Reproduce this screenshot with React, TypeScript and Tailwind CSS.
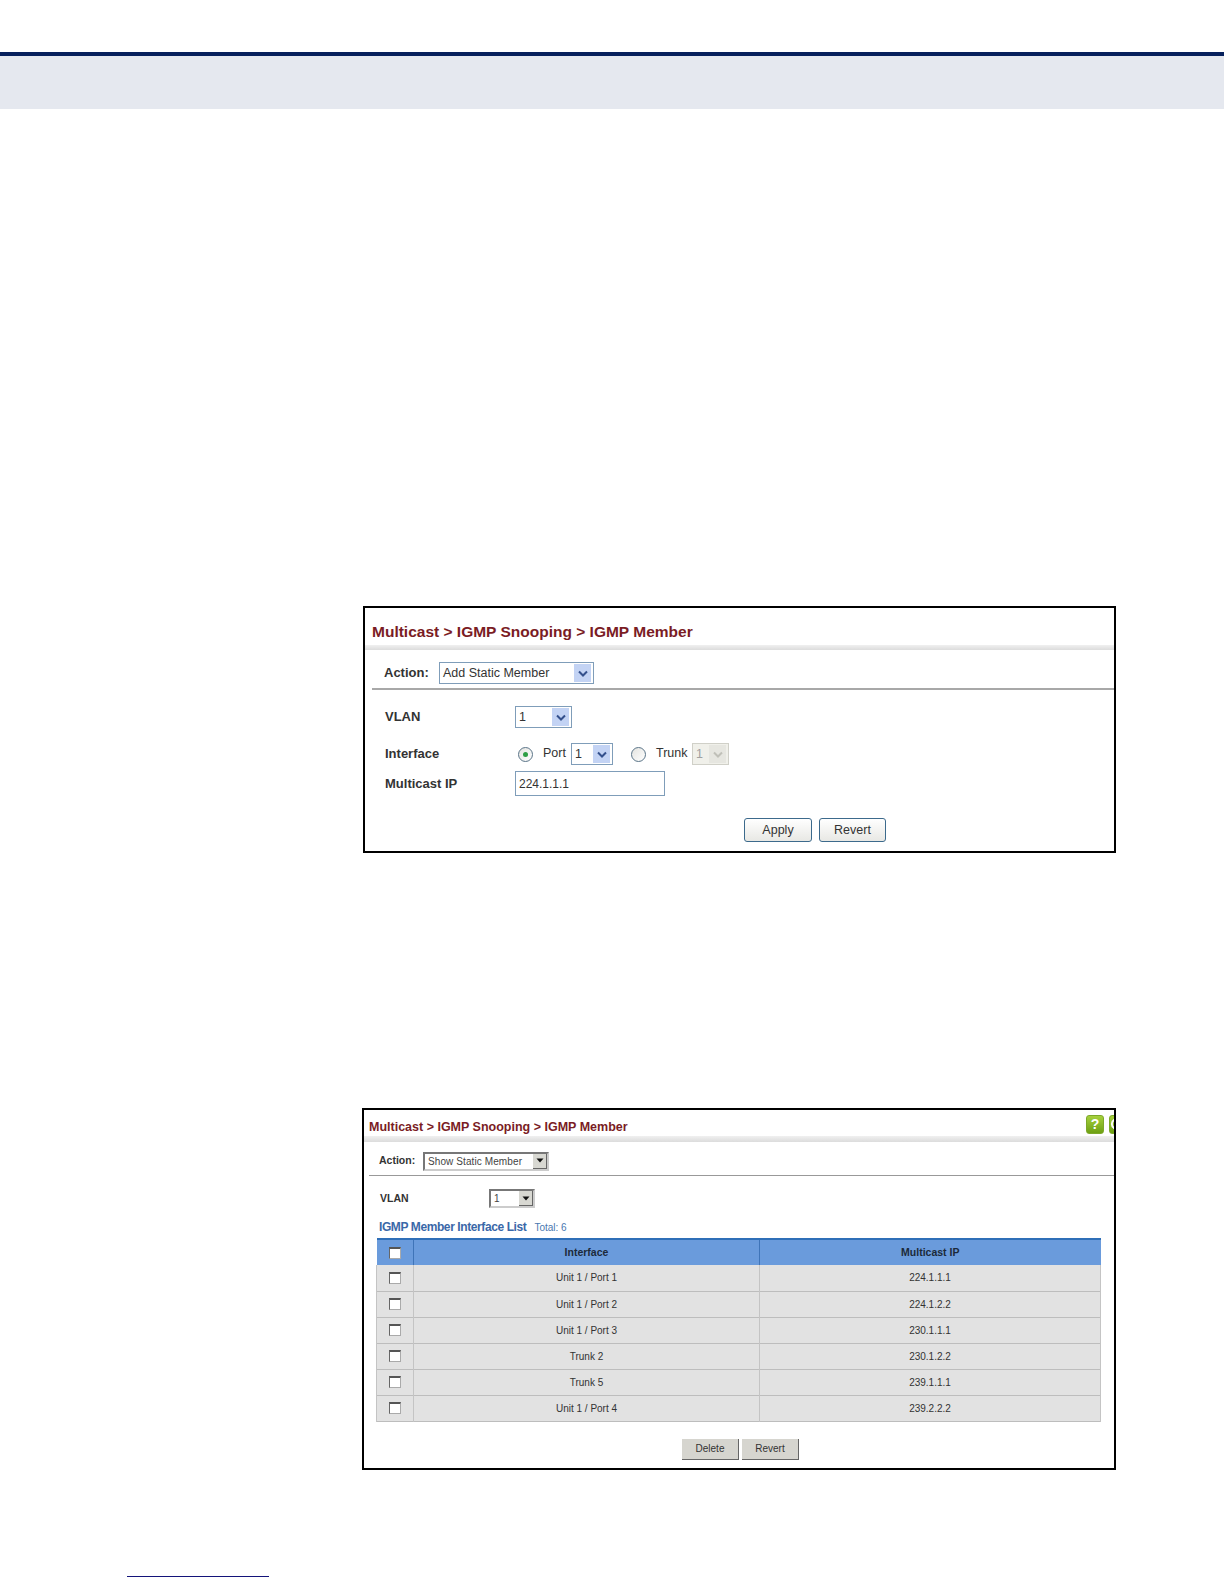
import type { ReactNode } from "react";

const rows = [
    { iface: "Unit 1 / Port 1", ip: "224.1.1.1" },
    { iface: "Unit 1 / Port 2", ip: "224.1.2.2" },
    { iface: "Unit 1 / Port 3", ip: "230.1.1.1" },
    { iface: "Trunk 2", ip: "230.1.2.2" },
    { iface: "Trunk 5", ip: "239.1.1.1" },
    { iface: "Unit 1 / Port 4", ip: "239.2.2.2" },
];

// Vista style dropdown from the first screenshot
function BlueSelect({ value, width, disabled }: { value: string; width: string; disabled?: boolean }) {
    return (
        <div className={`flex items-center justify-between h-[22px] border pl-[3px] pr-[2px] text-[12.5px] ${width} ${disabled ? "border-[#d0d0c8] bg-[#f0f0ea] text-[#a0a0a0]" : "border-[#7f9db9] bg-white text-[#333]"}`}>
            <span>{value}</span>
            <span className={`flex items-center justify-center w-[17px] h-[18px] ${disabled ? "bg-[#e6e6e0]" : "bg-[#c3d3f4]"}`}>
                <svg width="10" height="7" viewBox="0 0 10 7">
                    <path d="M1 1.5 L5 5.5 L9 1.5" fill="none" stroke={disabled ? "#c0c0b8" : "#34508c"} strokeWidth="2" />
                </svg>
            </span>
        </div>
    );
}

// Classic sunken dropdown from the second screenshot
function GraySelect({ value, width }: { value: string; width: string }) {
    return (
        <div className={`flex items-center justify-between h-[19px] border-2 border-t-[#777] border-l-[#777] border-r-[#ccc] border-b-[#ccc] pl-[3px] text-[10px] tracking-[0.1px] text-[#444] ${width}`}>
            <span>{value}</span>
            <span className="flex items-center justify-center w-[14px] h-[15px] bg-[#d8d8d2] border-r border-b border-[#666]">
                <svg width="8" height="5" viewBox="0 0 8 5">
                    <path d="M0.5 0.5 H7.5 L4 4.5 Z" fill="#111" />
                </svg>
            </span>
        </div>
    );
}

function Radio({ checked }: { checked?: boolean }) {
    return (
        <span className="flex items-center justify-center w-[15px] h-[15px] rounded-full border border-[#5a7488] bg-gradient-to-br from-[#e4e4e0] to-white">
            {checked && <span className="w-[5px] h-[5px] rounded-full bg-[#2f9e44]" />}
        </span>
    );
}

function RoundButton({ label, width }: { label: string; width: string }) {
    return (
        <div className={`flex items-center justify-center h-[24px] rounded-[3px] border border-[#3c6a8c] bg-gradient-to-b from-white to-[#e8e8e4] text-[12.5px] text-[#333] ${width}`}>
            {label}
        </div>
    );
}

function FlatButton({ label }: { label: string }) {
    return (
        <div className="flex items-center justify-center w-[57px] h-[21px] bg-[#d6d5cf] border-r border-b border-[#666] text-[10px] text-[#333]">
            {label}
        </div>
    );
}

function HelpIcon({ children }: { children: ReactNode }) {
    return (
        <span className="flex flex-none items-center justify-center w-[18px] h-[19px] rounded-[3px] bg-gradient-to-b from-[#a6d13c] to-[#6ea012] border border-[#7da82a] text-[14px] font-bold text-white">
            {children}
        </span>
    );
}

function Checkbox() {
    return <span className="block w-[12px] h-[12px] bg-white border border-[#aaa] border-t-2 border-t-[#555] border-l-[#666]" />;
}

function AddPanel() {
    return (
        <section className="ml-[363px] w-[753px] h-[247px] border-2 border-black bg-white font-['Liberation_Sans',Arial,sans-serif]">
            <h2 className="pl-[7px] pt-[14px] h-[37px] text-[15.5px] leading-[20px] font-bold text-[#7a1c24]">
                Multicast &gt; IGMP Snooping &gt; IGMP Member
            </h2>
            <div className="h-[5px] bg-gradient-to-b from-[#f0f0f0] to-[#dcdcdc]" />
            <div className="ml-[7px] h-[40px] flex items-center border-b-2 border-[#a8a8a8] pl-[12px] pt-[8px]">
                <span className="w-[55px] text-[13px] font-bold text-[#333]">Action:</span>
                <BlueSelect value="Add Static Member" width="w-[155px]" />
            </div>
            <div className="pl-[20px] pt-[16px]">
                <div className="flex items-center h-[22px]">
                    <span className="w-[130px] text-[13px] font-bold text-[#333]">VLAN</span>
                    <BlueSelect value="1" width="w-[57px]" />
                </div>
                <div className="flex items-center h-[22px] mt-[15px]">
                    <span className="w-[133px] text-[13px] font-bold text-[#333]">Interface</span>
                    <Radio checked />
                    <span className="ml-[10px] w-[28px] pb-[2px] text-[12.5px] text-[#333]">Port</span>
                    <BlueSelect value="1" width="w-[42px]" />
                    <span className="ml-[18px]"><Radio /></span>
                    <span className="ml-[10px] w-[37px] pb-[2px] text-[12.5px] text-[#333]">Trunk</span>
                    <span className="-ml-[1px]"><BlueSelect value="1" width="w-[37px]" disabled /></span>
                </div>
                <div className="flex items-center h-[25px] mt-[6px]">
                    <span className="w-[130px] text-[13px] font-bold text-[#333]">Multicast IP</span>
                    <div className="flex items-center w-[150px] h-[25px] border border-[#7f9db9] pl-[3px] text-[12px] text-[#333]">224.1.1.1</div>
                </div>
            </div>
            <div className="flex gap-[7px] ml-[379px] mt-[21px] pt-[1px]">
                <RoundButton label="Apply" width="w-[68px]" />
                <RoundButton label="Revert" width="w-[67px]" />
            </div>
        </section>
    );
}

function ShowPanel() {
    return (
        <section className="ml-[362px] mt-[255px] w-[754px] h-[362px] border-2 border-black bg-white overflow-hidden font-['Liberation_Sans',Arial,sans-serif]">
            <div className="flex justify-between items-center h-[26px] pl-[5px] pr-0">
                <h2 className="pt-[9px] text-[12.5px] font-bold text-[#7a1c24]">Multicast &gt; IGMP Snooping &gt; IGMP Member</h2>
                <div className="flex gap-[5px] w-[28px] mt-[2px] flex-none">
                    <HelpIcon>?</HelpIcon>
                    <HelpIcon>
                        <svg width="16" height="16" viewBox="0 0 16 16">
                            <path d="M9 3.5 A5 5 0 1 0 9 12.5" fill="none" stroke="#fff" strokeWidth="2" />
                        </svg>
                    </HelpIcon>
                </div>
            </div>
            <div className="h-[6px] bg-gradient-to-b from-[#f0f0f0] to-[#dcdcdc]" />
            <div className="ml-[5px] h-[34px] flex items-center border-b border-[#999] pl-[10px] pt-[5px]">
                <span className="w-[44px] text-[10.5px] font-bold text-[#333]">Action:</span>
                <GraySelect value="Show Static Member" width="w-[126px]" />
            </div>
            <div className="flex items-center h-[19px] mt-[13px] pl-[16px]">
                <span className="w-[109px] text-[10.5px] font-bold text-[#333]">VLAN</span>
                <GraySelect value="1" width="w-[46px]" />
            </div>
            <div className="flex items-baseline gap-[8px] h-[16px] mt-[10px] pl-[15px]">
                <span className="text-[12px] font-bold tracking-[-0.4px] text-[#3a68a8]">IGMP Member Interface List</span>
                <span className="text-[10px] text-[#4a78b0]">Total: 6</span>
            </div>
            <table className="ml-[12px] mt-[4px] w-[725px] table-fixed border-collapse text-[10px] text-[#333]">
                <colgroup>
                    <col className="w-[37px]" />
                    <col className="w-[346px]" />
                    <col />
                </colgroup>
                <thead>
                    <tr className="h-[26px] bg-[#6a9bdc] border-t-2 border-[#2f6fb8] text-[10.5px] font-bold text-[#1c2a3a]">
                        <th className="border-r border-[#3f74b8]">
                            <span className="flex justify-center"><Checkbox /></span>
                        </th>
                        <th className="border-r border-[#3f74b8]">Interface</th>
                        <th>Multicast IP</th>
                    </tr>
                </thead>
                <tbody>
                    {rows.map((row) => (
                        <tr key={row.ip} className="h-[26px] bg-[#e2e2e2] border-b border-[#bdbdbd]">
                            <td className="border-l border-r border-[#c4c4c4]">
                                <span className="flex justify-center"><Checkbox /></span>
                            </td>
                            <td className="border-r border-[#c4c4c4] text-center">{row.iface}</td>
                            <td className="border-r border-[#c4c4c4] text-center">{row.ip}</td>
                        </tr>
                    ))}
                </tbody>
            </table>
            <div className="flex gap-[3px] ml-[318px] mt-[17px]">
                <FlatButton label="Delete" />
                <FlatButton label="Revert" />
            </div>
        </section>
    );
}

export default function App() {
    return (
        <main className="relative w-[1224px] h-[1584px] bg-white overflow-hidden">
            <header className="mt-[52px] h-[57px] border-t-4 border-[#06205c] bg-[#e5e8ef]" />
            <div className="pt-[497px]">
                <AddPanel />
                <ShowPanel />
            </div>
            <div className="ml-[127px] mt-[106px] w-[142px] h-[1px] bg-[#14147a]" />
        </main>
    );
}
